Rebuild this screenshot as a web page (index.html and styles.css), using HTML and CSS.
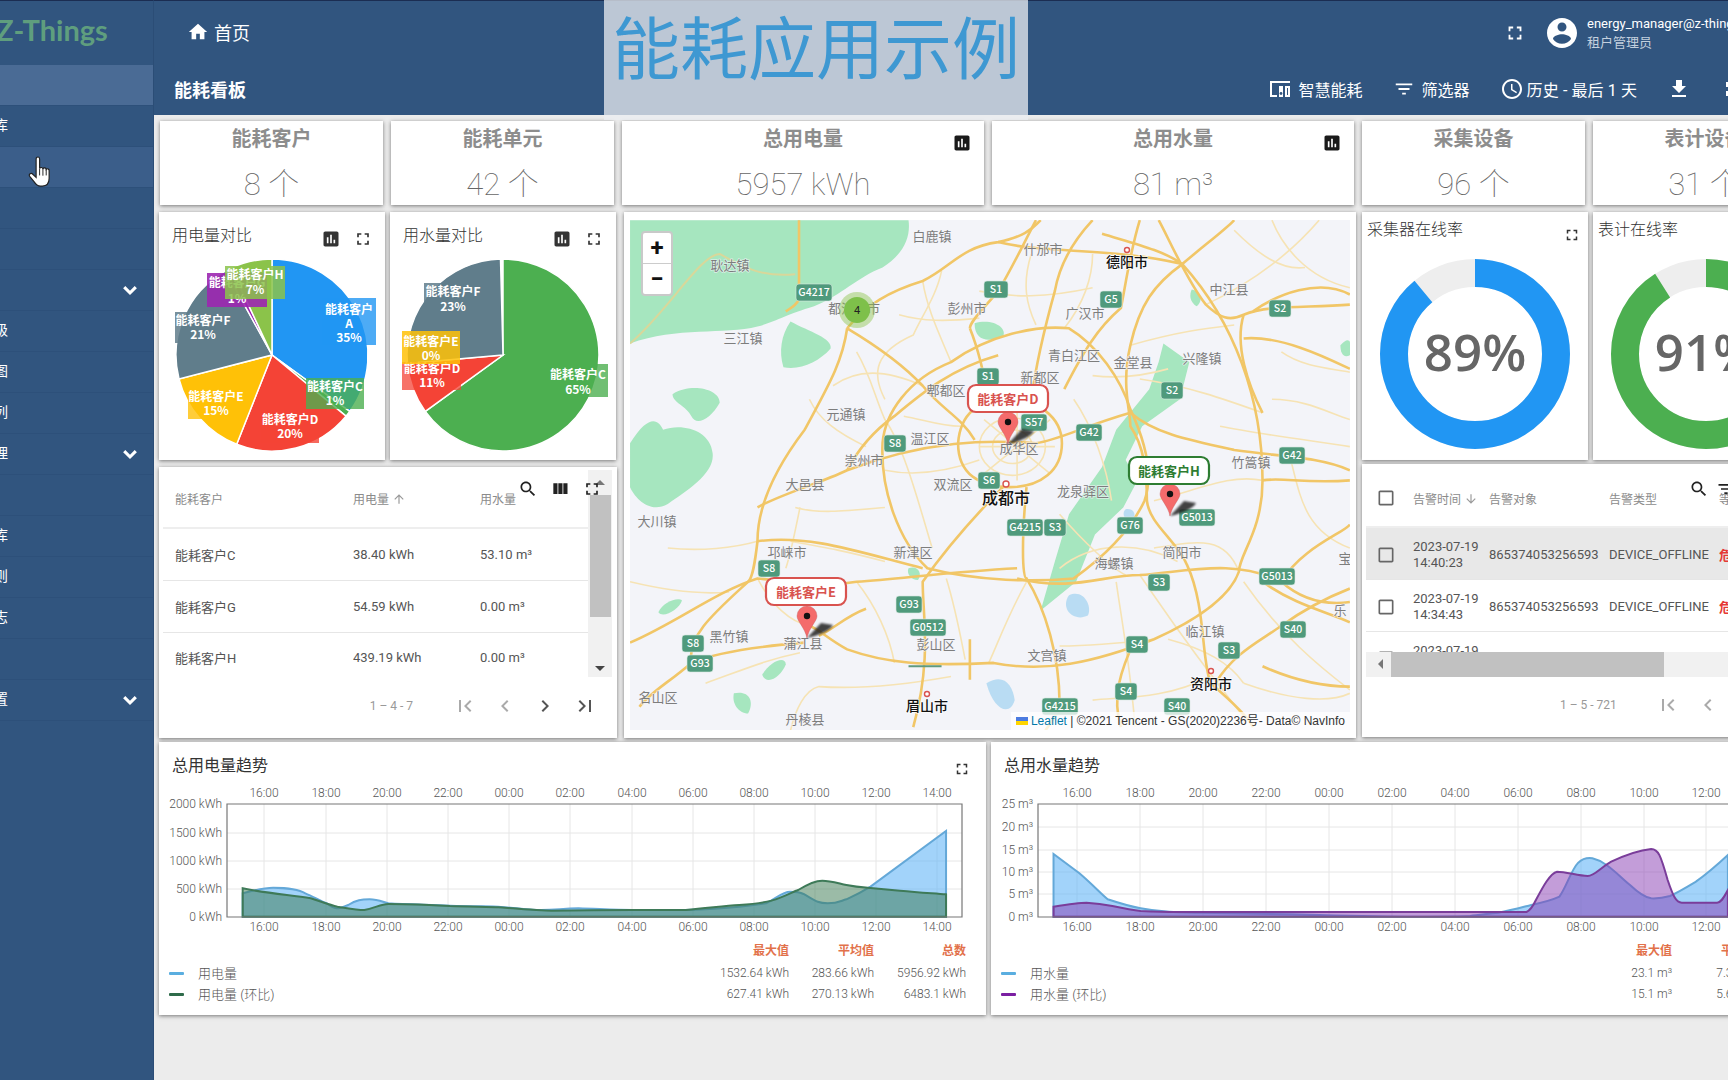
FILE: index.html
```html
<!DOCTYPE html>
<html lang="zh">
<head>
<meta charset="utf-8">
<title>能耗看板</title>
<link rel="stylesheet" href="styles.css">
</head>
<body>
<svg class="defs" width="0" height="0">
  <symbol id="i-full" viewBox="0 0 24 24"><path d="M7 14H5v5h5v-2H7v-3zm-2-4h2V7h3V5H5v5zm12 7h-3v2h5v-5h-2v3zM14 5v2h3v3h2V5h-5z"/></symbol>
  <symbol id="i-home" viewBox="0 0 24 24"><path d="M10 20v-6h4v6h5v-8h3L12 3 2 12h3v8z"/></symbol>
  <symbol id="i-search" viewBox="0 0 24 24"><path d="M15.5 14h-.79l-.28-.27C15.41 12.59 16 11.11 16 9.5 16 5.91 13.09 3 9.5 3S3 5.91 3 9.5 5.91 16 9.5 16c1.61 0 3.09-.59 4.23-1.57l.27.28v.79l5 4.99L20.49 19l-4.99-5zm-6 0C7.01 14 5 11.99 5 9.5S7.01 5 9.5 5 14 7.01 14 9.5 11.99 14 9.5 14z"/></symbol>
  <symbol id="i-cols" viewBox="0 0 24 24"><path d="M10 18h5V5h-5v13zm-6 0h5V5H4v13zM16 5v13h5V5h-5z"/></symbol>
  <symbol id="i-first" viewBox="0 0 24 24"><path d="M18.41 16.59L13.82 12l4.59-4.59L17 6l-6 6 6 6zM6 6h2v12H6z"/></symbol>
  <symbol id="i-prev" viewBox="0 0 24 24"><path d="M15.41 7.41L14 6l-6 6 6 6 1.41-1.41L10.83 12z"/></symbol>
  <symbol id="i-next" viewBox="0 0 24 24"><path d="M10 6L8.59 7.41 13.17 12l-4.58 4.59L10 18l6-6z"/></symbol>
  <symbol id="i-last" viewBox="0 0 24 24"><path d="M5.59 7.41L10.18 12l-4.59 4.59L7 18l6-6-6-6zM16 6h2v12h-2z"/></symbol>
  <symbol id="i-user" viewBox="0 0 24 24"><path d="M12 2C6.48 2 2 6.48 2 12s4.48 10 10 10 10-4.48 10-10S17.52 2 12 2zm0 3c1.66 0 3 1.34 3 3s-1.34 3-3 3-3-1.34-3-3 1.34-3 3-3zm0 14.2c-2.5 0-4.71-1.28-6-3.22.03-1.99 4-3.08 6-3.08 1.99 0 5.97 1.09 6 3.08-1.29 1.94-3.5 3.22-6 3.22z"/></symbol>
  <symbol id="i-filter" viewBox="0 0 24 24"><path d="M10 18h4v-2h-4v2zM3 6v2h18V6H3zm3 7h12v-2H6v2z"/></symbol>
  <symbol id="i-clock" viewBox="0 0 24 24"><path d="M11.99 2C6.47 2 2 6.48 2 12s4.47 10 9.99 10C17.52 22 22 17.52 22 12S17.52 2 11.99 2zM12 20c-4.42 0-8-3.58-8-8s3.58-8 8-8 8 3.58 8 8-3.58 8-8 8zm.5-13H11v6l5.25 3.15.75-1.23-4.5-2.67z"/></symbol>
  <symbol id="i-down" viewBox="0 0 24 24"><path d="M19 9h-4V3H9v6H5l7 7 7-7zM5 18v2h14v-2H5z"/></symbol>
  <symbol id="i-chart" viewBox="0 0 24 24"><path d="M19 3H5c-1.1 0-2 .9-2 2v14c0 1.1.9 2 2 2h14c1.1 0 2-.9 2-2V5c0-1.1-.9-2-2-2zM9 17H7v-7h2v7zm4 0h-2V7h2v10zm4 0h-2v-4h2v4z"/></symbol>
  <symbol id="i-more" viewBox="0 0 24 24"><path d="M12 17.5L4.5 10l2.4-2.4L12 12.7l5.1-5.1 2.4 2.4z"/></symbol>
  <symbol id="i-box" viewBox="0 0 24 24"><path d="M19 5v14H5V5h14m0-2H5c-1.1 0-2 .9-2 2v14c0 1.1.9 2 2 2h14c1.1 0 2-.9 2-2V5c0-1.1-.9-2-2-2z"/></symbol>
  <symbol id="i-up" viewBox="0 0 24 24"><path d="M4 12l1.41 1.41L11 7.83V20h2V7.83l5.58 5.59L20 12l-8-8-8 8z"/></symbol>
  <symbol id="i-dn" viewBox="0 0 24 24"><path d="M20 12l-1.41-1.41L13 16.17V4h-2v12.17l-5.58-5.59L4 12l8 8 8-8z"/></symbol>
  <symbol id="i-smart" viewBox="0 0 24 24"><path d="M2 4h20v2H4v12h5v2H2zM11 9h4v11h-4zm2 2v7h0zM17 9h5v11h-5zm2 2v7h1v-7z" fill-rule="evenodd"/><circle cx="13" cy="16.5" r="1.4" fill="#31557f"/></symbol>
  <symbol id="pin" viewBox="0 0 44 34" overflow="visible">
    <path class="pin-shadow" d="M10 32L24 17L36 19C33 25 20 30 10 32Z"/>
    <path class="pin-body" d="M10 32C8 22 0 15 0 10A10 10 0 1 1 20 10C20 15 12 22 10 32Z"/>
    <circle cx="10" cy="10" r="3.2" fill="#111"/>
  </symbol>
</svg>

<aside class="sidebar">
  <div class="logo">Z-Things</div>
  <nav class="nav">
    <div class="nav-item active"></div>
    <div class="nav-item"><span class="nav-label">库</span></div>
    <div class="nav-item hover"></div>
    <div class="nav-item"></div>
    <div class="nav-item"></div>
    <div class="nav-item"><svg class="nav-arrow"><use href="#i-more"/></svg></div>
    <div class="nav-item"><span class="nav-label">级</span></div>
    <div class="nav-item"><span class="nav-label">图</span></div>
    <div class="nav-item"><span class="nav-label">列</span></div>
    <div class="nav-item"><span class="nav-label">理</span><svg class="nav-arrow"><use href="#i-more"/></svg></div>
    <div class="nav-item"></div>
    <div class="nav-item"><span class="nav-label">库</span></div>
    <div class="nav-item"><span class="nav-label">则</span></div>
    <div class="nav-item"><span class="nav-label">志</span></div>
    <div class="nav-item"></div>
    <div class="nav-item"><span class="nav-label">置</span><svg class="nav-arrow"><use href="#i-more"/></svg></div>
  </nav>
  <svg class="cursor" viewBox="0 0 24 34">
    <path d="M8 3c0-2.6 3.6-2.6 3.6 0v10c.6-1.6 3.2-1.5 3.4.3.6-1.5 3.2-1.3 3.4.5.7-1.1 3-.8 3 1.2v8c0 5-2.4 8-7 8h-2c-3.400 0-4.600-1.500-6.600-4.600L1.400 21c-1.400-2.200 1.400-4 3.200-2.200L8 22Z" fill="#fff" stroke="#222" stroke-width="1.2"/>
    <path d="M11.600 13v7M15 13.300v7M18.400 13.800v6.200" stroke="#222" stroke-width="1" fill="none"/>
  </svg>
</aside>

<main class="main">
  <header class="header">
    <div class="head-top">
      <div class="crumb"><svg class="i22 white"><use href="#i-home"/></svg><span>首页</span></div>
      <svg class="i22 white head-full"><use href="#i-full"/></svg>
      <svg class="avatar white"><use href="#i-user"/></svg>
      <div class="user">
        <div class="user-mail">energy_manager@z-things.com</div>
        <div class="user-role">租户管理员</div>
      </div>
    </div>
    <div class="head-sub">
      <h1 class="page-title">能耗看板</h1>
      <div class="actions">
        <div class="action"><svg class="i24 white"><use href="#i-smart"/></svg><span>智慧能耗</span></div>
        <div class="action"><svg class="i22 white"><use href="#i-filter"/></svg><span>筛选器</span></div>
        <div class="action narrow"><svg class="i24 white"><use href="#i-clock"/></svg><span>历史 - 最后 1 天</span></div>
        <svg class="i24 white"><use href="#i-down"/></svg>
        <svg class="i24 white"><use href="#i-full"/></svg>
      </div>
    </div>
  </header>

  <div class="content">
    <section class="stat-row">
      <div class="card stat w223"><div class="stat-title">能耗客户</div><div class="stat-value">8 个</div></div>
      <div class="card stat w223"><div class="stat-title">能耗单元</div><div class="stat-value">42 个</div></div>
      <div class="card stat w362"><div class="stat-title">总用电量</div><div class="stat-value">5957 kWh</div><svg class="stat-icon"><use href="#i-chart"/></svg></div>
      <div class="card stat w362"><div class="stat-title">总用水量</div><div class="stat-value">81 m³</div><svg class="stat-icon"><use href="#i-chart"/></svg></div>
      <div class="card stat w223"><div class="stat-title">采集设备</div><div class="stat-value">96 个</div></div>
      <div class="card stat w223"><div class="stat-title">表计设备</div><div class="stat-value">31 个</div></div>
    </section>

    <section class="mid-row">
      <div class="col-left">
        <div class="pair">
          <div class="card tile">
            <div class="tile-head"><span>用电量对比</span><svg class="i20 tool"><use href="#i-chart"/></svg><svg class="i20 tool"><use href="#i-full"/></svg></div>
            <svg class="tile-svg" viewBox="159 252 226 205">
              <g transform="translate(272 355)" class="pie">
                <path fill="#2196f3" d="M0 0V-96A96 96 0 0 1 77.700 56.400Z"/>
                <path fill="#4caf50" d="M0 0L77.700 56.400A96 96 0 0 1 74 61.200Z"/>
                <path fill="#f44336" d="M0 0L74 61.200A96 96 0 0 1-35.300 89.300Z"/>
                <path fill="#ffc107" d="M0 0L-35.300 89.300A96 96 0 0 1-93 23.900Z"/>
                <path fill="#607d8b" d="M0 0L-93 23.900A96 96 0 0 1-46.300-84.100Z"/>
                <path fill="#9c27b0" d="M0 0L-46.300-84.100A96 96 0 0 1-40.900-86.900Z"/>
                <path fill="#8bc34a" d="M0 0L-40.900-86.900A96 96 0 0 1 0-96Z"/>
              </g>
              <rect x="322" y="298" width="54" height="47" fill="#2196f3" opacity=".8"/>
              <text class="pl" text-anchor="middle"><tspan x="349" y="314">能耗客户</tspan><tspan x="349" y="328">A</tspan><tspan x="349" y="342">35%</tspan></text>
              <rect x="306" y="378" width="58" height="31" fill="#4caf50" opacity=".8"/>
              <text class="pl" text-anchor="middle"><tspan x="335" y="391">能耗客户C</tspan><tspan x="335" y="405">1%</tspan></text>
              <rect x="261" y="412" width="58" height="31" fill="#f44336" opacity=".8"/>
              <text class="pl" text-anchor="middle"><tspan x="290" y="424">能耗客户D</tspan><tspan x="290" y="438">20%</tspan></text>
              <rect x="188" y="388" width="56" height="31" fill="#ffc107" opacity=".8"/>
              <text class="pl" text-anchor="middle"><tspan x="216" y="401">能耗客户E</tspan><tspan x="216" y="415">15%</tspan></text>
              <rect x="175" y="312" width="56" height="31" fill="#607d8b" opacity=".85"/>
              <text class="pl" text-anchor="middle"><tspan x="203" y="325">能耗客户F</tspan><tspan x="203" y="339">21%</tspan></text>
              <rect x="207" y="273" width="60" height="34" fill="#9c27b0" opacity=".9"/>
              <text class="pl" text-anchor="middle"><tspan x="237" y="287">能耗客户G</tspan><tspan x="237" y="303">1%</tspan></text>
              <rect x="225" y="266" width="60" height="33" fill="#8bc34a" opacity=".85"/>
              <text class="pl" text-anchor="middle"><tspan x="255" y="279">能耗客户H</tspan><tspan x="255" y="294">7%</tspan></text>
            </svg>
          </div>
          <div class="card tile">
            <div class="tile-head"><span>用水量对比</span><svg class="i20 tool"><use href="#i-chart"/></svg><svg class="i20 tool"><use href="#i-full"/></svg></div>
            <svg class="tile-svg" viewBox="390 252 226 205">
              <g transform="translate(503 355)" class="pie">
                <path fill="#4caf50" d="M0 0V-96A96 96 0 1 1-77.700 56.400Z"/>
                <path fill="#f44336" d="M0 0L-77.700 56.400A96 96 0 0 1-95.600 8.400Z"/>
                <path fill="#607d8b" d="M0 0L-95.600 8.400A96 96 0 0 1-2.500-96Z"/>
              </g>
              <rect x="424" y="283" width="58" height="32" fill="#607d8b" opacity=".85"/>
              <text class="pl" text-anchor="middle"><tspan x="453" y="296">能耗客户F</tspan><tspan x="453" y="311">23%</tspan></text>
              <rect x="549" y="364" width="59" height="33" fill="#4caf50" opacity=".8"/>
              <text class="pl" text-anchor="middle"><tspan x="578" y="379">能耗客户C</tspan><tspan x="578" y="394">65%</tspan></text>
              <rect x="402" y="362" width="59" height="28" fill="#f44336" opacity=".75"/>
              <text class="pl" text-anchor="middle"><tspan x="432" y="373">能耗客户D</tspan><tspan x="432" y="387">11%</tspan></text>
              <rect x="402" y="331" width="58" height="33" fill="#ffc107" opacity=".85"/>
              <text class="pl" text-anchor="middle"><tspan x="431" y="346">能耗客户E</tspan><tspan x="431" y="360">0%</tspan></text>
            </svg>
          </div>
        </div>

        <div class="card table-card">
          <div class="tbl-tools">
            <svg class="i20 dark"><use href="#i-search"/></svg>
            <svg class="i20 dark"><use href="#i-cols"/></svg>
            <svg class="i20 dark"><use href="#i-full"/></svg>
          </div>
          <div class="tbl tbl-energy">
            <div class="tr th"><span>能耗客户</span><span class="sorted">用电量 <svg class="i14 gray"><use href="#i-up"/></svg></span><span>用水量</span></div>
            <div class="tr"><span>能耗客户C</span><span>38.40 kWh</span><span>53.10 m³</span></div>
            <div class="tr"><span>能耗客户G</span><span>54.59 kWh</span><span>0.00 m³</span></div>
            <div class="tr"><span>能耗客户H</span><span>439.19 kWh</span><span>0.00 m³</span></div>
          </div>
          <div class="vscroll"><i class="arrow-up"></i><div class="vthumb"></div><i class="arrow-down"></i></div>
          <div class="pager">
            <span class="pager-text">1 – 4 - 7</span>
            <svg class="i24 light"><use href="#i-first"/></svg>
            <svg class="i24 light"><use href="#i-prev"/></svg>
            <svg class="i24 dim"><use href="#i-next"/></svg>
            <svg class="i24 dim"><use href="#i-last"/></svg>
          </div>
        </div>
      </div>

      <div class="card map-card">
        <div class="map">
          <svg class="map-svg" viewBox="0 0 720 510">
            <g transform="translate(-9.4 -10) scale(.472 .338)">
              <g class="land">
                <path d="M20 30H610C615 80 600 130 555 170C500 200 470 250 410 285C350 310 330 330 290 345C220 370 120 345 20 395Z"/>
                <path d="M360 330C400 360 450 380 445 410C420 450 380 475 345 465C335 420 340 370 360 330Z"/>
                <path d="M110 545C150 510 210 530 210 570C190 620 160 640 150 610C140 580 110 570 110 545Z"/>
                <path d="M20 690C60 600 80 620 90 650C130 630 190 650 195 720C200 780 140 830 100 870C60 900 30 850 20 820Z"/>
                <path d="M1150 395L1205 450L1185 560L1105 640L1070 740L1095 800L1065 880L1005 960L965 1100L890 1185L920 1040L950 900L1020 760L1050 650L1120 530L1140 450Z"/>
                <path d="M750 335C790 320 820 350 810 375C780 390 750 390 750 335Z"/>
                <path d="M1210 235C1230 240 1235 270 1220 285C1205 270 1205 250 1210 235Z"/>
                <path d="M240 1430C270 1420 285 1450 270 1490C250 1490 235 1460 240 1430Z"/>
                <path d="M300 1375C320 1330 350 1320 350 1345C340 1380 310 1410 300 1375Z"/>
                <path d="M80 1190C90 1160 120 1145 130 1155C125 1180 90 1210 80 1190Z"/>
                <path d="M610 1060C630 1050 640 1075 630 1095C615 1095 605 1075 610 1060Z"/>
                <path d="M1525 400C1545 370 1550 390 1545 430C1530 440 1525 420 1525 400Z"/>
              </g>
              <g class="lake">
                <path d="M950 1140C980 1120 1000 1170 990 1200C960 1220 930 1180 950 1140Z"/>
                <path d="M775 1400C810 1370 830 1400 835 1450C825 1500 790 1480 775 1400Z"/>
                <path d="M1070 885C1090 880 1095 910 1080 920C1065 915 1062 895 1070 885Z"/>
              </g>
              <path class="mtn" d="M20 395C100 300 170 130 210 130C260 170 300 200 370 190"/>
              <g class="thin">
                <path d="M680 180C670 250 640 310 620 370C540 420 530 480 560 560"/>
                <path d="M590 310C640 330 690 330 760 320M1000 490C1060 500 1110 490 1160 470"/>
                <path d="M1270 640C1340 660 1450 680 1545 700"/>
                <path d="M500 420C530 490 540 560 560 620C600 700 630 860 660 1000"/>
                <path d="M760 740C700 770 630 790 560 770"/>
                <path d="M930 1060C1000 980 1100 980 1180 1040"/>
                <path d="M1100 1080C1150 1180 1190 1270 1320 1500"/>
                <path d="M560 1040C480 1010 440 1000 360 980M380 880C370 950 360 1020 350 1060"/>
                <path d="M180 1400C260 1360 310 1330 380 1310"/>
                <path d="M840 600V800M760 700H920M770 620L910 780M770 780L910 620"/>
                <path d="M1400 420C1450 470 1520 470 1545 480M1300 60C1350 130 1400 180 1450 170"/>
                <path d="M1320 1100C1400 1260 1480 1350 1545 1420"/>
                <path d="M700 1380C620 1400 520 1420 420 1410C390 1420 370 1480 360 1540"/>
                <path d="M1000 1450C1060 1440 1150 1450 1250 1380M1320 1400C1420 1450 1500 1460 1545 1430"/>
                <path d="M1050 1100C1060 1200 1080 1350 1090 1530"/>
                <ellipse cx="830" cy="700" rx="42" ry="50"/>
                <ellipse cx="830" cy="700" rx="70" ry="85"/>
                <path d="M960 560C1000 640 1030 760 1040 860M930 900C980 980 1040 1060 1070 1080"/>
                <path d="M690 1090C710 1180 720 1260 730 1330M860 1100C820 1200 800 1280 780 1340"/>
                <path d="M560 880C480 890 420 900 370 880M520 700C460 660 420 620 400 560"/>
                <path d="M700 450C680 380 650 300 640 210M940 350C980 280 1000 200 1000 130"/>
                <path d="M1130 860C1220 830 1290 780 1360 800M1130 1000C1220 980 1280 960 1310 1070"/>
                <path d="M1240 280C1300 240 1400 160 1480 30M1380 30C1400 100 1450 200 1545 230"/>
                <path d="M1080 400C1180 360 1240 350 1300 340M1100 500C1200 520 1280 560 1360 600"/>
                <path d="M500 1100C540 1170 570 1260 580 1340M290 1090C320 1170 360 1220 400 1230"/>
                <path d="M20 1100C80 1120 160 1140 230 1130M100 1000C170 1010 240 1000 290 980"/>
                <path d="M1420 740C1440 850 1450 950 1545 1000M1380 560C1450 560 1500 600 1545 620"/>
                <path d="M1160 1270C1240 1300 1290 1340 1320 1400M930 1290C1000 1290 1070 1280 1130 1270"/>
                <path d="M640 520C560 470 500 470 450 520M720 640C680 640 640 620 600 610"/>
                <path d="M880 340C860 280 850 220 870 130M760 240C830 260 900 260 1000 230"/>
              </g>
              <g class="road">
                <path d="M378 30V225M378 265C370 285 360 290 350 300"/>
                <path d="M480 350C520 280 570 240 640 210C700 170 720 110 800 95C850 80 870 60 890 30"/>
                <path d="M480 350C470 450 440 520 390 650C330 760 290 870 290 980C285 1040 280 1090 270 1100C200 1190 140 1260 150 1340C100 1400 60 1430 40 1470"/>
                <path d="M480 350C540 400 600 460 640 520C680 590 720 610 750 680"/>
                <path d="M715 690C720 600 760 560 825 560C880 560 935 610 935 690C935 770 890 820 825 820C760 820 715 780 715 690Z"/>
                <path d="M555 690C560 600 610 500 700 450C780 370 880 340 950 350C1010 400 1060 500 1080 590C1110 680 1130 780 1110 860C1080 950 1020 1030 960 1090C880 1100 760 1100 650 1060C590 980 550 830 555 690Z"/>
                <path d="M1190 160C1300 330 1360 560 1360 800C1360 950 1310 1020 1310 1070C1290 1150 1210 1220 1130 1270C1000 1340 900 1370 790 1340C640 1350 560 1340 480 1300C440 1270 420 1240 400 1230"/>
                <path d="M1545 770C1480 730 1400 730 1300 710C1200 680 1130 660 1080 600C980 640 930 680 880 690C780 680 650 680 480 770C420 810 340 840 290 880"/>
                <path d="M1545 280C1450 290 1370 280 1320 310C1290 330 1270 320 1240 280C1200 210 1160 80 1140 30"/>
                <path d="M1190 160C1130 220 1100 280 1080 400C1060 520 1080 590 1080 640C1110 700 1115 780 1115 860C1120 930 1180 980 1200 1050C1240 1170 1230 1330 1250 1400"/>
                <path d="M1000 30C960 90 930 160 920 240C900 340 880 460 870 560"/>
                <path d="M740 350C760 420 770 480 780 570"/>
                <path d="M880 30C850 110 830 170 800 240C770 290 740 330 740 350"/>
                <path d="M1100 30C1080 120 1070 220 1060 290C1010 350 980 420 940 530"/>
                <path d="M1545 250C1480 200 1390 250 1340 300"/>
                <path d="M1545 1120C1490 1150 1450 1180 1400 1230C1350 1280 1300 1310 1260 1400"/>
                <path d="M840 1060C700 1070 600 1090 500 1100C420 1120 360 1100 290 1090C200 1130 120 1220 20 1280"/>
                <path d="M840 1090C960 1130 1020 1080 1100 1080C1200 1070 1300 1030 1400 1100C1440 1150 1490 1170 1545 1160"/>
                <path d="M860 820C850 960 850 1090 860 1090C900 1180 930 1320 930 1460"/>
                <path d="M810 820C740 920 680 1020 640 1100C640 1200 660 1330 620 1530"/>
                <path d="M390 1280C300 1290 200 1310 150 1340"/>
                <path d="M520 1180C480 1200 450 1240 420 1260M740 1270V1390"/>
                <path d="M1320 310C1300 400 1330 520 1360 600"/>
                <path d="M1360 1100C1430 1170 1500 1190 1545 1220"/>
                <path d="M1090 1270C1060 1360 1040 1440 1060 1530"/>
                <path d="M1190 160C1240 100 1280 60 1300 30M1190 160C1150 120 1090 100 1020 70M800 95C900 130 1040 110 1190 160"/>
                <path d="M1320 380C1400 370 1500 440 1545 470M480 770C510 690 550 640 580 610C640 540 700 470 800 430"/>
                <path d="M1400 1100C1440 1000 1540 950 1545 930M1545 800C1450 810 1400 790 1360 800"/>
                <path d="M290 980C400 960 500 1010 640 1060M900 1540C920 1500 930 1480 930 1460"/>
                <path d="M1250 1400C1300 1460 1330 1500 1340 1530M1360 1350C1440 1400 1500 1410 1545 1410"/>
              </g>
              <path class="rail" d="M610 1350H680"/>
            </g>

            <g class="town" text-anchor="middle">
              <text x="302" y="21">白鹿镇</text><text x="413" y="34">什邡市</text><text x="100" y="50">耿达镇</text>
              <text x="599" y="74">中江县</text><text x="337" y="93">彭州市</text><text x="455" y="98">广汉市</text>
              <text x="224" y="93">都江堰市</text><text x="113" y="123">三江镇</text><text x="444" y="140">青白江区</text>
              <text x="503" y="147">金堂县</text><text x="572" y="143">兴隆镇</text><text x="410" y="162">新都区</text>
              <text x="316" y="175">郫都区</text><text x="216" y="199">元通镇</text><text x="300" y="223">温江区</text>
              <text x="389" y="233">成华区</text><text x="234" y="245">崇州市</text><text x="621" y="247">竹篙镇</text>
              <text x="175" y="269">大邑县</text><text x="323" y="269">双流区</text><text x="453" y="276">龙泉驿区</text>
              <text x="552" y="337">简阳市</text><text x="27" y="306">大川镇</text><text x="157" y="337">邛崃市</text>
              <text x="283" y="337">新津区</text><text x="484" y="348">海螺镇</text><text x="99" y="421">黑竹镇</text>
              <text x="306" y="429">彭山区</text><text x="173" y="428">蒲江县</text><text x="575" y="416">临江镇</text>
              <text x="417" y="440">文宫镇</text><text x="28" y="482">名山区</text><text x="175" y="504">丹棱县</text>
              <text x="715" y="343">宝</text><text x="710" y="395">乐</text>
            </g>
            <g class="city" text-anchor="middle">
              <circle class="dot" cx="497" cy="30" r="2.500"/><text x="497" y="47">德阳市</text>
              <circle class="dot" cx="376" cy="264" r="3"/><text class="big" x="376" y="284">成都市</text>
              <circle class="dot" cx="581" cy="451" r="2.500"/><text x="581" y="469">资阳市</text>
              <circle class="dot" cx="297" cy="474" r="2.500"/><text x="297" y="491">眉山市</text>
            </g>
            <g class="shields" text-anchor="middle">
              <rect x="166" y="64" width="36" height="17" rx="3"/><text x="184" y="76">G4217</text>
              <rect x="354" y="61" width="24" height="17" rx="3"/><text x="366" y="73">S1</text>
              <rect x="470" y="71" width="22" height="17" rx="3"/><text x="481" y="83">G5</text>
              <rect x="639" y="80" width="22" height="17" rx="3"/><text x="650" y="92">S2</text>
              <rect x="347" y="148" width="22" height="17" rx="3"/><text x="358" y="160">S1</text>
              <rect x="531" y="162" width="22" height="17" rx="3"/><text x="542" y="174">S2</text>
              <rect x="391" y="194" width="26" height="17" rx="3"/><text x="404" y="206">S57</text>
              <rect x="446" y="204" width="26" height="17" rx="3"/><text x="459" y="216">G42</text>
              <rect x="254" y="215" width="22" height="17" rx="3"/><text x="265" y="227">S8</text>
              <rect x="649" y="227" width="26" height="17" rx="3"/><text x="662" y="239">G42</text>
              <rect x="348" y="252" width="22" height="17" rx="3"/><text x="359" y="264">S6</text>
              <rect x="549" y="289" width="36" height="17" rx="3"/><text x="567" y="301">G5013</text>
              <rect x="377" y="299" width="36" height="17" rx="3"/><text x="395" y="311">G4215</text>
              <rect x="414" y="299" width="22" height="17" rx="3"/><text x="425" y="311">S3</text>
              <rect x="487" y="297" width="26" height="17" rx="3"/><text x="500" y="309">G76</text>
              <rect x="128" y="340" width="22" height="17" rx="3"/><text x="139" y="352">S8</text>
              <rect x="518" y="354" width="22" height="17" rx="3"/><text x="529" y="366">S3</text>
              <rect x="629" y="348" width="36" height="17" rx="3"/><text x="647" y="360">G5013</text>
              <rect x="266" y="376" width="26" height="17" rx="3"/><text x="279" y="388">G93</text>
              <rect x="280" y="399" width="36" height="17" rx="3"/><text x="298" y="411">G0512</text>
              <rect x="52" y="415" width="22" height="17" rx="3"/><text x="63" y="427">S8</text>
              <rect x="650" y="401" width="26" height="17" rx="3"/><text x="663" y="413">S40</text>
              <rect x="496" y="416" width="22" height="17" rx="3"/><text x="507" y="428">S4</text>
              <rect x="588" y="422" width="22" height="17" rx="3"/><text x="599" y="434">S3</text>
              <rect x="57" y="435" width="26" height="17" rx="3"/><text x="70" y="447">G93</text>
              <rect x="485" y="463" width="22" height="17" rx="3"/><text x="496" y="475">S4</text>
              <rect x="412" y="478" width="36" height="17" rx="3"/><text x="430" y="490">G4215</text>
              <rect x="534" y="478" width="26" height="17" rx="3"/><text x="547" y="490">S40</text>
            </g>

            <circle class="cluster-o" cx="227" cy="90" r="18"/>
            <circle class="cluster-i" cx="227" cy="90" r="13"/>
            <text class="cluster-t" x="227" y="94" text-anchor="middle">4</text>

            <use href="#pin" x="368" y="192" width="44" height="34"/>
            <use href="#pin" x="530" y="264" width="44" height="34"/>
            <use href="#pin" x="167" y="386" width="44" height="34"/>

            <g class="bubble red"><rect x="338" y="165" width="80" height="27" rx="8"/><text x="378" y="184" text-anchor="middle">能耗客户D</text></g>
            <g class="bubble green"><rect x="499" y="237" width="80" height="27" rx="8"/><text x="539" y="256" text-anchor="middle">能耗客户H</text></g>
            <g class="bubble red"><rect x="136" y="358" width="80" height="27" rx="8"/><text x="176" y="377" text-anchor="middle">能耗客户E</text></g>
          </svg>
          <div class="zoom-ctl"><div>+</div><div>−</div></div>
          <div class="attrib"><i class="flag"></i> <a>Leaflet</a> | ©2021 Tencent - GS(2020)2236号- Data© NavInfo</div>
        </div>
      </div>

      <div class="col-right">
        <div class="pair">
          <div class="card tile gauge">
            <div class="tile-head gauge-head"><span>采集器在线率</span><svg class="i18"><use href="#i-full"/></svg></div>
            <svg class="tile-svg" viewBox="0 0 226 205">
              <circle class="g-bg" cx="113" cy="102" r="81"/>
              <circle class="g-val blue" cx="113" cy="102" r="81" pathLength="100" stroke-dasharray="89 100" transform="rotate(-90 113 102)"/>
              <text class="g-text" x="113" y="119" text-anchor="middle">89%</text>
            </svg>
          </div>
          <div class="card tile gauge">
            <div class="tile-head gauge-head"><span>表计在线率</span><svg class="i18"><use href="#i-full"/></svg></div>
            <svg class="tile-svg" viewBox="0 0 226 205">
              <circle class="g-bg" cx="113" cy="102" r="81"/>
              <circle class="g-val green" cx="113" cy="102" r="81" pathLength="100" stroke-dasharray="91 100" transform="rotate(-90 113 102)"/>
              <text class="g-text" x="113" y="119" text-anchor="middle">91%</text>
            </svg>
          </div>
        </div>
        <div class="card table-card alarm-card">
          <div class="alarm-tools">
            <svg class="i20 dark"><use href="#i-search"/></svg>
            <svg class="i20 dark"><use href="#i-filter"/></svg>
          </div>
          <div class="tbl tbl-alarm">
            <div class="tr th">
              <svg class="i20 check"><use href="#i-box"/></svg>
              <span class="sorted">告警时间 <svg class="i14 gray"><use href="#i-dn"/></svg></span><span>告警对象</span><span>告警类型</span><span>等级</span>
            </div>
            <div class="alarm-body">
              <div class="tr selected">
                <svg class="i20 check"><use href="#i-box"/></svg>
                <span class="time">2023-07-19<br>14:40:23</span><span>865374053256593</span><span>DEVICE_OFFLINE</span><span class="danger">危险</span>
              </div>
              <div class="tr">
                <svg class="i20 check"><use href="#i-box"/></svg>
                <span class="time">2023-07-19<br>14:34:43</span><span>865374053256593</span><span>DEVICE_OFFLINE</span><span class="danger">危险</span>
              </div>
              <div class="tr">
                <svg class="i20 check"><use href="#i-box"/></svg>
                <span class="time">2023-07-19<br>14:30:11</span><span>865374053256593</span><span>DEVICE_OFFLINE</span><span class="danger">危险</span>
              </div>
            </div>
            <div class="hscroll"><i class="arrow-left"></i><div class="hthumb"></div></div>
          </div>
          <div class="pager pager-alarm">
            <span class="pager-text">1 – 5 - 721</span>
            <svg class="i24 light"><use href="#i-first"/></svg>
            <svg class="i24 light"><use href="#i-prev"/></svg>
          </div>
        </div>
      </div>
    </section>

    <section class="chart-row">
      <div class="card chart-card power">
        <div class="chart-head"><span>总用电量趋势</span><svg class="i18"><use href="#i-full"/></svg></div>
        <svg class="chart-svg" viewBox="159 780 827 155">
          <g class="grid">
            <path d="M227 833H962M227 861H962M227 889H962"/>
            <path d="M264 804V917M326 804V917M387 804V917M448 804V917M509 804V917M570 804V917M632 804V917M693 804V917M754 804V917M815 804V917M876 804V917M937 804V917"/>
          </g>
          <g transform="translate(150 740) scale(.5357 .3333)">
            <path class="area blue" d="M173 530V460C200 448 215 443 230 443C255 443 280 450 290 460C305 470 320 485 330 490C345 510 350 508 370 495C385 480 395 478 410 478C425 478 435 486 445 490C480 494 520 494 560 497C600 499 640 499 650 500C690 505 710 510 730 510C760 510 770 505 800 505C840 507 870 510 900 510C950 510 980 510 1000 510C1040 508 1070 505 1100 500C1125 496 1140 492 1150 490C1170 475 1180 455 1195 455C1205 455 1215 458 1220 462C1240 480 1245 490 1265 490C1285 490 1290 482 1300 478C1325 460 1335 450 1345 440L1486 273V530Z"/>
            <path class="area green" d="M173 530V445C220 460 260 465 300 475C320 485 335 495 350 500C370 505 385 510 400 510C420 505 430 492 445 492C480 492 520 494 560 498C600 500 640 501 650 502C700 508 730 512 750 512C800 512 850 510 900 510C950 510 980 510 1000 510C1040 505 1070 498 1100 495C1130 492 1145 488 1160 482C1185 470 1200 455 1210 450C1225 435 1240 422 1255 422C1270 422 1285 430 1300 435C1315 440 1330 442 1340 443C1370 448 1385 450 1400 452C1440 458 1465 460 1486 463V530Z"/>
          </g>
          <path class="axis" d="M227 917V804H962V917Z"/>
          <g class="tick-x" text-anchor="middle">
            <text x="264" y="797">16:00</text><text x="326" y="797">18:00</text><text x="387" y="797">20:00</text><text x="448" y="797">22:00</text><text x="509" y="797">00:00</text><text x="570" y="797">02:00</text><text x="632" y="797">04:00</text><text x="693" y="797">06:00</text><text x="754" y="797">08:00</text><text x="815" y="797">10:00</text><text x="876" y="797">12:00</text><text x="937" y="797">14:00</text>
            <text x="264" y="931">16:00</text><text x="326" y="931">18:00</text><text x="387" y="931">20:00</text><text x="448" y="931">22:00</text><text x="509" y="931">00:00</text><text x="570" y="931">02:00</text><text x="632" y="931">04:00</text><text x="693" y="931">06:00</text><text x="754" y="931">08:00</text><text x="815" y="931">10:00</text><text x="876" y="931">12:00</text><text x="937" y="931">14:00</text>
          </g>
          <g class="tick-y" text-anchor="end">
            <text x="222" y="808">2000 kWh</text><text x="222" y="837">1500 kWh</text><text x="222" y="865">1000 kWh</text><text x="222" y="893">500 kWh</text><text x="222" y="921">0 kWh</text>
          </g>
        </svg>
        <div class="legend">
          <span></span><b>最大值</b><b>平均值</b><b>总数</b>
          <span class="lg-name"><i class="sw sw-blue"></i>用电量</span><span>1532.64 kWh</span><span>283.66 kWh</span><span>5956.92 kWh</span>
          <span class="lg-name"><i class="sw sw-green"></i>用电量 (环比)</span><span>627.41 kWh</span><span>270.13 kWh</span><span>6483.1 kWh</span>
        </div>
      </div>

      <div class="card chart-card water-card">
        <div class="chart-head"><span>总用水量趋势</span></div>
        <svg class="chart-svg" viewBox="991 780 878 155">
          <g class="grid">
            <path d="M1038 827H1800M1038 850H1800M1038 872H1800M1038 894H1800"/>
            <path d="M1077 804V917M1140 804V917M1203 804V917M1266 804V917M1329 804V917M1392 804V917M1455 804V917M1518 804V917M1581 804V917M1644 804V917M1706 804V917"/>
          </g>
          <g transform="translate(990 740) scale(.4706 .3333)">
            <path class="area blue" d="M135 530V342L190 400C215 430 235 460 250 478C280 492 300 500 320 505C345 512 360 514 380 515C410 517 430 518 450 518C550 520 620 522 700 525C780 528 850 530 900 530C960 530 1000 530 1020 528C1045 524 1065 520 1080 518C1110 510 1130 502 1150 495C1180 486 1195 480 1210 470C1225 440 1235 390 1250 368C1260 355 1270 353 1280 355C1295 360 1305 370 1310 375C1330 395 1345 418 1360 435C1375 455 1390 472 1405 475C1420 476 1435 472 1445 468C1465 455 1480 442 1500 425C1520 405 1545 375 1568 345V530Z"/>
            <path class="area purple" d="M135 530V500C170 492 190 488 205 488C225 490 245 494 260 498C280 504 300 510 320 513C350 515 380 516 400 516H1140C1150 510 1155 495 1160 480C1175 440 1190 400 1205 395C1225 395 1250 408 1270 408C1285 408 1295 385 1320 365C1350 345 1385 330 1405 327C1420 327 1425 345 1440 420C1452 470 1458 488 1470 488H1545C1555 488 1560 470 1568 450V530Z"/>
          </g>
          <path class="axis" d="M1038 917V804H1800V917Z"/>
          <g class="tick-x" text-anchor="middle">
            <text x="1077" y="797">16:00</text><text x="1140" y="797">18:00</text><text x="1203" y="797">20:00</text><text x="1266" y="797">22:00</text><text x="1329" y="797">00:00</text><text x="1392" y="797">02:00</text><text x="1455" y="797">04:00</text><text x="1518" y="797">06:00</text><text x="1581" y="797">08:00</text><text x="1644" y="797">10:00</text><text x="1706" y="797">12:00</text>
            <text x="1077" y="931">16:00</text><text x="1140" y="931">18:00</text><text x="1203" y="931">20:00</text><text x="1266" y="931">22:00</text><text x="1329" y="931">00:00</text><text x="1392" y="931">02:00</text><text x="1455" y="931">04:00</text><text x="1518" y="931">06:00</text><text x="1581" y="931">08:00</text><text x="1644" y="931">10:00</text><text x="1706" y="931">12:00</text>
          </g>
          <g class="tick-y" text-anchor="end">
            <text x="1033" y="808">25 m³</text><text x="1033" y="831">20 m³</text><text x="1033" y="854">15 m³</text><text x="1033" y="876">10 m³</text><text x="1033" y="898">5 m³</text><text x="1033" y="921">0 m³</text>
          </g>
        </svg>
        <div class="legend">
          <span></span><b>最大值</b><b>平均值</b><b>总数</b>
          <span class="lg-name"><i class="sw sw-blue"></i>用水量</span><span>23.1 m³</span><span>7.38 m³</span><span>81.24 m³</span>
          <span class="lg-name"><i class="sw sw-purple"></i>用水量 (环比)</span><span>15.1 m³</span><span>5.65 m³</span><span>62.15 m³</span>
        </div>
      </div>
    </section>
  </div>
</main>

<div class="caption">能耗应用示例</div>
</body>
</html>
```
FILE: styles.css
```css
* { box-sizing: border-box; }
html, body { margin: 0; height: 100%; }
body {
  width: 1728px; height: 1080px; overflow: hidden; display: flex;
  background: #ececec; color: #444;
  font-family: Roboto, "Noto Sans CJK SC", sans-serif;
  position: relative;
}
svg { display: block; flex: none; fill: currentColor; }
.defs { position: absolute; }
.i14 { width: 14px; height: 14px; display: inline-block; vertical-align: -2px; }
.i18 { width: 18px; height: 18px; }
.i20 { width: 20px; height: 20px; }
.i22 { width: 22px; height: 22px; }
.i24 { width: 24px; height: 24px; }
.white { color: #fff; }
.dark { color: #222; }
.dim { color: #555; }
.light { color: #aaa; }
.gray { color: #999; }

/* sidebar */
.sidebar { width: 154px; flex: none; background: #31557f; position: relative; overflow: hidden; border-right: 1px solid #2b4d76; border-top: 1px solid #1b2d52; }
.logo { height: 64px; padding: 11px 0 0; margin-left: -4px; color: #5f9e7e; font: 700 29px/36px Lato, sans-serif; white-space: nowrap; }
.nav-item { height: 41px; display: flex; align-items: center; border-bottom: 1px solid #2d507a; position: relative; color: #fff; }
.nav-item.active { background: #4a6b95; }
.nav-item.hover { background: #3b5e8a; }
.nav-label { font-size: 14px; margin: -4px 0 0 -6px; }
.nav-arrow { width: 22px; height: 22px; position: absolute; left: 119px; top: 9px; color: #fff; }
.cursor { position: absolute; left: 28px; top: 155px; width: 24px; height: 33px; }

/* header */
.main { flex: none; width: 1574px; display: flex; flex-direction: column; overflow: hidden; }
.header { height: 115px; background: #31557f; color: #fff; flex: none; border-top: 1px solid #1b2d52; }
.head-top { height: 64px; display: flex; align-items: center; padding-left: 33px; }
.crumb { display: flex; align-items: center; gap: 5px; font-size: 18px; margin-top: -3px; }
.head-full { margin-left: auto; position: relative; left: -2px; }
.avatar { width: 36px; height: 36px; margin-left: 16px; }
.user { width: 141px; margin-left: 7px; white-space: nowrap; font-size: 13px; line-height: 19px; margin-top: -1px; }
.user-role { color: #c3d0de; }
.head-sub { height: 50px; display: flex; align-items: center; padding-left: 20px; }
.page-title { margin: -2px 0 0; font-size: 18px; font-weight: 700; }
.actions { margin-left: auto; margin-right: -17px; display: flex; align-items: center; gap: 30px; font-size: 16px; margin-top: -2px; }
.action { display: flex; align-items: center; gap: 7px; }
.action.narrow { gap: 3px; letter-spacing: .1px; }

/* cards */
.card { background: #fff; box-shadow: 0 1px 4px rgba(0,0,0,.5); flex: none; position: relative; }
.content { padding: 6px 0 0 5px; flex: 1; }
.stat-row { display: flex; gap: 8px; height: 84px; margin-left: 1px; }
.stat { text-align: center; }
.w223 { width: 223px; }
.w362 { width: 362px; }
.stat-title { font-size: 20px; font-weight: 700; color: #8d8d8d; line-height: 26px; padding-top: 5px; }
.stat-value { font-size: 31px; font-weight: 100; color: #666; line-height: 42px; margin-top: 12px; }
.stat-icon { position: absolute; right: 12px; top: 12px; width: 20px; height: 20px; color: #1a1a1a; }

.mid-row { display: flex; gap: 6px; margin-top: 7px; }
.col-left { width: 459px; flex: none; }
.col-right { width: 466px; flex: none; }
.pair { display: flex; gap: 5px; }
.tile { width: 226px; height: 248px; }
.tile-head { height: 40px; display: flex; align-items: center; gap: 12px; padding: 10px 12px 0 13px; font-size: 16px; color: #333; font-weight: 300; }
.tile-head span { margin-right: auto; margin-top: -6px; }
.tile-head .tool { margin-top: 4px; }
.tile-svg { width: 226px; height: 205px; }
.gauge-head { padding: 6px 7px 0 5px; }
.gauge-head span { margin-top: -14px; }
.pie path { stroke: #fff; stroke-width: 1.5; }
.pl { font: 700 12px "Noto Sans CJK SC", Roboto, sans-serif; fill: #fff; }
.g-bg { fill: none; stroke: #eee; stroke-width: 28; }
.g-val { fill: none; stroke-width: 28; }
.g-val.blue { stroke: #2196f3; }
.g-val.green { stroke: #4caf50; }
.g-text { font: 600 51px "Open Sans", sans-serif; fill: #666; }

/* tables */
.table-card { height: 271px; margin-top: 7px; width: 458px; overflow: hidden; }
.tbl { font-size: 13px; color: #555; }
.tr { display: grid; align-items: center; height: 52px; border-bottom: 1px solid #e6e6e6; }
.th { height: 62px; font-size: 12px; color: #8b8b8b; border-bottom: 2px solid #eee; padding-top: 2px; }
.tbl-energy { width: 430px; margin-left: 4px; height: 211px; overflow: hidden; }
.tbl-energy .tr { grid-template-columns: 178px 127px 1fr; padding-left: 12px; }
.tbl-energy .tr:last-child { height: 47px; padding-top: 3px; }
.tbl-tools { position: absolute; left: 359px; top: 12px; display: flex; gap: 12px; z-index: 2; }
.vscroll { position: absolute; left: 429px; top: 3px; width: 24px; height: 207px; background: #f1f1f1; display: flex; flex-direction: column; align-items: center; padding: 25px 0 0; }
.vthumb { width: 21px; height: 122px; background: #c1c1c1; }
.arrow-up, .arrow-down, .arrow-left { position: absolute; width: 0; height: 0; border: 5px solid transparent; }
.arrow-up { top: 5px; left: 7px; border-bottom-color: #777; }
.arrow-down { bottom: 1px; left: 7px; border-top-color: #444; }
.arrow-left { left: 7px; top: 7px; border-right-color: #777; }
.pager { height: 56px; display: flex; align-items: center; padding-right: 20px; justify-content: flex-end; gap: 16px; color: #999; font-size: 12px; }
.pager-text { margin-right: 24px; letter-spacing: 0; }

.alarm-card { width: 466px; height: 273px; margin-top: 4px; }
.alarm-tools { position: absolute; left: 327px; top: 15px; display: flex; gap: 7px; z-index: 2; }
.tbl-alarm { margin-left: 4px; height: 213px; overflow: hidden; }
.tbl-alarm .tr { grid-template-columns: 47px 76px 120px 110px 60px; justify-items: start; }
.tbl-alarm .th { height: 64px; padding-top: 6px; }
.check { margin-left: 10px; color: #666; }
.alarm-body { height: 124px; overflow: hidden; }
.alarm-body .tr { padding-top: 2px; }
.alarm-body .selected { background: #e8e8e8; }
.time { line-height: 16px; }
.danger { color: #e53935; font-weight: 700; white-space: nowrap; }
.hscroll { height: 25px; background: #f1f1f1; position: relative; padding-left: 25px; }
.hthumb { width: 273px; height: 25px; background: #c1c1c1; }
.pager-alarm { height: 56px; justify-content: flex-start; padding-left: 198px; gap: 16px; }
.pager-alarm .pager-text { margin-right: 23px; letter-spacing: 0; }

/* map */
.map-card { width: 732px; height: 526px; padding: 8px 6px; }
.map { position: relative; width: 720px; height: 510px; overflow: hidden; background: #f3f4f9; }
.map-svg { width: 720px; height: 510px; }
.land path { fill: #a6e6bf; }
.lake path { fill: #b9dcf3; }
.mtn { fill: none; stroke: #d9d79a; stroke-width: 2; vector-effect: non-scaling-stroke; }
.thin path, .thin ellipse { fill: none; stroke: #f6e3b4; stroke-width: 1.6; vector-effect: non-scaling-stroke; }
.road path { fill: none; stroke: #f1c667; stroke-width: 2.6; vector-effect: non-scaling-stroke; }
.rail { fill: none; stroke: #5f9a7f; stroke-width: 2; vector-effect: non-scaling-stroke; }
.town text { font: 13px "Noto Sans CJK SC", sans-serif; fill: #7d7d7d; stroke: rgba(243,244,249,.7); stroke-width: 1.5; paint-order: stroke; }
.city text { font: 500 14px "Noto Sans CJK SC", sans-serif; fill: #111; stroke: rgba(255,255,255,.8); stroke-width: 1.5; paint-order: stroke; }
.city .big { font-size: 16px; }
.dot { fill: #fff; stroke: #d9534f; stroke-width: 1.4; }
.shields rect { fill: #4f9a7c; stroke: #d8e8df; stroke-width: .6; }
.shields text { font: 500 10.5px "Noto Sans CJK SC", Roboto, sans-serif; fill: #fff; }
.cluster-o { fill: #8bc34a; opacity: .45; }
.cluster-i { fill: #7ec04a; }
.cluster-t { font: 11px Roboto, sans-serif; fill: #222; }
.pin-body { fill: #f46b6b; stroke: #c45a5a; stroke-width: .4; }
.pin-shadow { fill: #222; opacity: .85; filter: blur(1px); }
.bubble rect { fill: #fff; stroke-width: 2.2; }
.bubble text { font: 700 13px "Noto Sans CJK SC", Roboto, sans-serif; }
.bubble.red rect { stroke: #d9534f; }
.bubble.red text { fill: #d9534f; }
.bubble.green rect { stroke: #2e7d32; }
.bubble.green text { fill: #2e7d32; }
.zoom-ctl { position: absolute; left: 11px; top: 11px; width: 32px; background: #fff; border: 2px solid #c9c9c9; border-radius: 4px; font: 700 24px/30px Roboto, sans-serif; color: #111; text-align: center; }
.zoom-ctl div + div { border-top: 1px solid #ccc; }
.attrib { position: absolute; right: 0; bottom: 0; padding: 0 5px; background: rgba(255,255,255,.75); font: 12px/18px "Liberation Sans", "Noto Sans CJK SC", sans-serif; color: #333; white-space: nowrap; }
.attrib a { color: #0078a8; }
.flag { display: inline-block; width: 12px; height: 8px; background: linear-gradient(#4c7be0 50%, #ffd500 50%); }

/* charts */
.chart-row { display: flex; gap: 5px; margin-top: 4px; }
.chart-card { height: 273px; }
.power { width: 827px; }
.water-card { width: 878px; }
.chart-head { height: 38px; display: flex; align-items: center; justify-content: space-between; padding: 10px 15px 0 13px; font-size: 16px; color: #333; }
.chart-head span { margin-top: -5px; }
.chart-head .i18 { margin-top: 5px; }
.chart-svg { width: 100%; height: 155px; }
.grid path { stroke: #e6e6e6; stroke-width: 1; fill: none; }
.axis { fill: none; stroke: #777; stroke-width: 1.2; }
.area { stroke-width: 2; vector-effect: non-scaling-stroke; }
.area.blue { fill: rgba(100,181,246,.6); stroke: #64a8d8; }
.area.green { fill: rgba(56,120,80,.5); stroke: #3e7a58; }
.area.purple { fill: rgba(136,60,180,.5); stroke: #7a3d9a; }
.tick-x text, .tick-y text { font: 300 12px Roboto, sans-serif; fill: #555; }
.legend { display: grid; grid-template-columns: 1fr 120px 85px 92px; font-size: 12px; color: #555; padding: 6px 20px 0 10px; line-height: 21.500px; text-align: right; font-weight: 300; }
.legend b { color: #e2714a; font-weight: 700; }
.lg-name { text-align: left; display: flex; align-items: center; gap: 14px; font-size: 13px; }
.sw { width: 15px; height: 3px; border-radius: 1px; }
.sw-blue { background: #5aaee0; }
.sw-green { background: #2e6b4a; }
.sw-purple { background: #7b1fa2; }

/* caption overlay */
.caption { position: absolute; left: 604px; top: 0; width: 424px; height: 120px; padding-bottom: 32px; display: flex; align-items: center; justify-content: center; background: rgba(235,238,242,.75); color: #3e98d2; font: 400 68px "Noto Sans CJK SC", sans-serif; white-space: nowrap; }
```
